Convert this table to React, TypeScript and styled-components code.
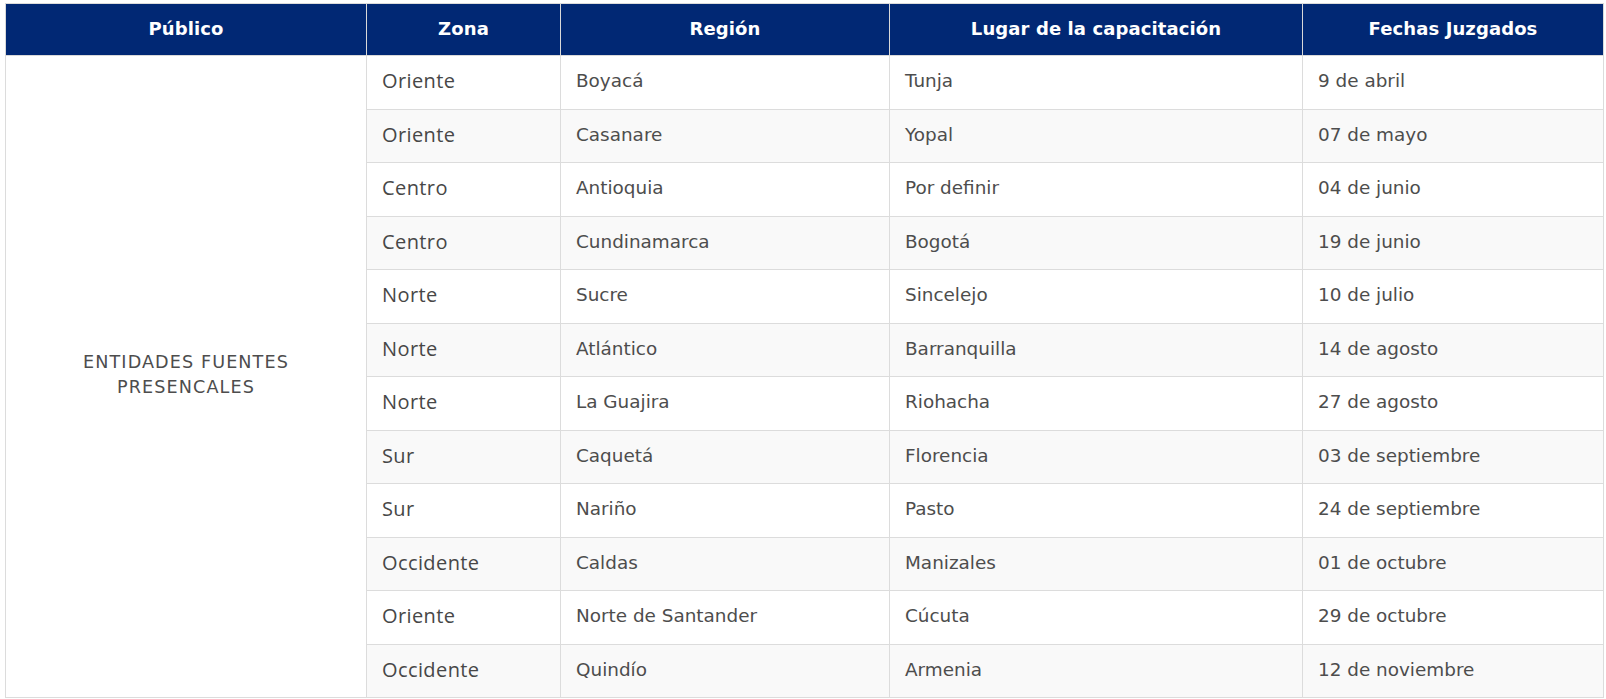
import React from 'react';
import styled, { createGlobalStyle } from 'styled-components';

const GlobalStyle = createGlobalStyle`
  body {
    margin: 0;
    background: #fff;
    font-family: "DejaVu Sans", "Liberation Sans", sans-serif;
  }
`;

const Wrap = styled.div`
  padding: 3px 3px 0 5px;
`;

const Table = styled.table`
  width: 1598px;
  border-collapse: collapse;
  table-layout: fixed;
  border: 1px solid #dcdcdc;
`;

const Col = styled.col<{ $w: number }>`
  width: ${p => p.$w}px;
`;

const HeadRow = styled.tr`
  height: 52px;
  background: #012874;
`;

const HeadCell = styled.th`
  padding: 0 15px 3px;
  border: 1px solid #d9d9d9;
  border-top: none;
  color: #fff;
  font-size: 18px;
  font-weight: 700;
  text-align: center;
  vertical-align: middle;
  letter-spacing: 0.1px;
`;

const Row = styled.tr<{ $odd: boolean }>`
  height: 53.5px;
  background: ${p => (p.$odd ? '#f9f9f9' : '#fff')};
`;

const Cell = styled.td`
  padding: 0 15px 3px;
  border: 1px solid #dcdcdc;
  color: #4d4d4d;
  font-size: 18.4px;
  vertical-align: middle;
  white-space: nowrap;
`;

const ZoneCell = styled(Cell)`
  font-family: "Open Sans", "Noto Sans", sans-serif;
  font-size: 20px;
  letter-spacing: 0.4px;
  color: #474747;
`;

const AudienceCell = styled.td`
  padding: 0 30px 3px;
  border: 1px solid #dcdcdc;
  background: #fff;
  color: #4d4d4d;
  font-size: 17.6px;
  line-height: 25px;
  letter-spacing: 1.1px;
  text-align: center;
  vertical-align: middle;
`;

const rows = [
  ['Oriente', 'Boyacá', 'Tunja', '9 de abril'],
  ['Oriente', 'Casanare', 'Yopal', '07 de mayo'],
  ['Centro', 'Antioquia', 'Por definir', '04 de junio'],
  ['Centro', 'Cundinamarca', 'Bogotá', '19 de junio'],
  ['Norte', 'Sucre', 'Sincelejo', '10 de julio'],
  ['Norte', 'Atlántico', 'Barranquilla', '14 de agosto'],
  ['Norte', 'La Guajira', 'Riohacha', '27 de agosto'],
  ['Sur', 'Caquetá', 'Florencia', '03 de septiembre'],
  ['Sur', 'Nariño', 'Pasto', '24 de septiembre'],
  ['Occidente', 'Caldas', 'Manizales', '01 de octubre'],
  ['Oriente', 'Norte de Santander', 'Cúcuta', '29 de octubre'],
  ['Occidente', 'Quindío', 'Armenia', '12 de noviembre'],
];

const columns: [string, number][] = [
  ['Público', 361],
  ['Zona', 194],
  ['Región', 329],
  ['Lugar de la capacitación', 413],
  ['Fechas Juzgados', 301],
];

export default function App() {
  return (
    <Wrap>
      <GlobalStyle />
      <Table>
        <colgroup>
          {columns.map(([label, w]) => (
            <Col key={label} $w={w} />
          ))}
        </colgroup>
        <thead>
          <HeadRow>
            {columns.map(([label]) => (
              <HeadCell key={label}>{label}</HeadCell>
            ))}
          </HeadRow>
        </thead>
        <tbody>
          {rows.map(([zona, region, lugar, fecha], i) => (
            <Row key={i} $odd={i % 2 === 1}>
              {i === 0 && (
                <AudienceCell rowSpan={rows.length}>ENTIDADES FUENTES PRESENCALES</AudienceCell>
              )}
              <ZoneCell>{zona}</ZoneCell>
              <Cell>{region}</Cell>
              <Cell>{lugar}</Cell>
              <Cell>{fecha}</Cell>
            </Row>
          ))}
        </tbody>
      </Table>
    </Wrap>
  );
}
